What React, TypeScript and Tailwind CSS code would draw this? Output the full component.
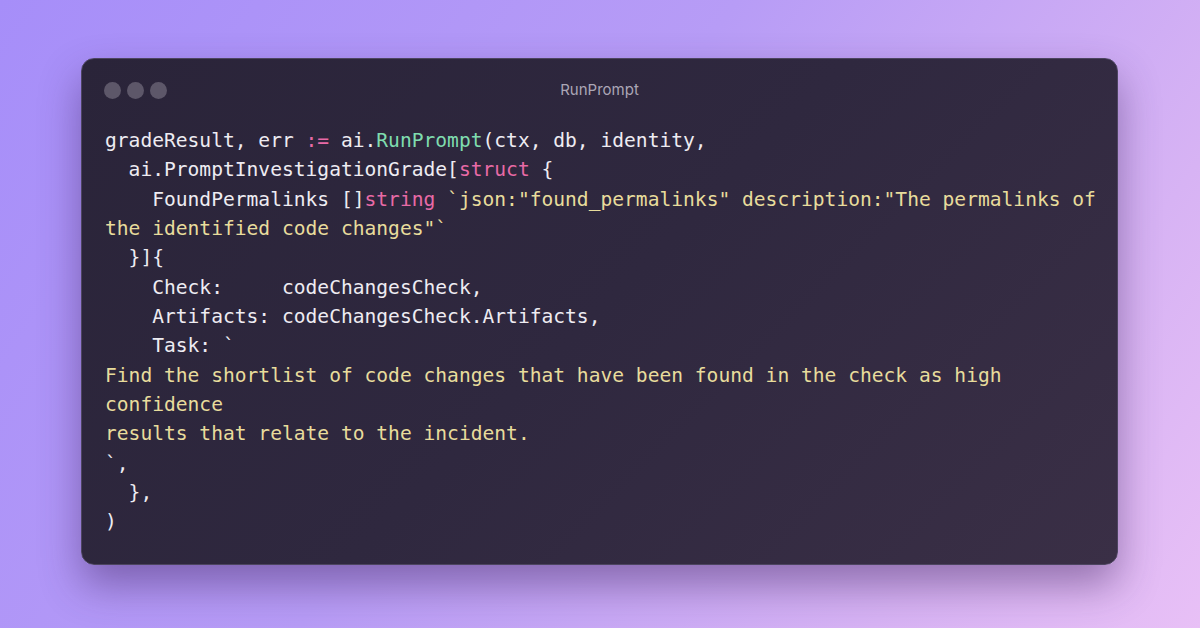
import React from "react";

const W = "text-[#eeecf2]";
const P = "text-[#e86aa6]";
const G = "text-[#7fdcaf]";
const Y = "text-[#e8dc9c]";

type Seg = [string, string];

const lines: Seg[][] = [
  [[W, "gradeResult, err "], [P, ":="], [W, " ai."], [G, "RunPrompt"], [W, "(ctx, db, identity,"]],
  [[W, "  ai.PromptInvestigationGrade["], [P, "struct"], [W, " {"]],
  [[W, "    FoundPermalinks []"], [P, "string"], [W, " "], [Y, '`json:"found_permalinks" description:"The permalinks of']],
  [[Y, 'the identified code changes"`']],
  [[W, "  }]{"]],
  [[W, "    Check:     codeChangesCheck,"]],
  [[W, "    Artifacts: codeChangesCheck.Artifacts,"]],
  [[W, "    Task: `"]],
  [[Y, "Find the shortlist of code changes that have been found in the check as high"]],
  [[Y, "confidence"]],
  [[Y, "results that relate to the incident."]],
  [[W, "`,"]],
  [[W, "  },"]],
  [[W, ")"]],
];

export default function App() {
  return (
    <div className="w-[1200px] h-[628px] overflow-hidden bg-[linear-gradient(125deg,#a68ef9_0%,#b79cf6_45%,#d7b3f4_80%,#e8c0f6_100%)] pt-[58px] px-[81px]">
      <div className="w-[1037px] h-[507px] rounded-[13px] border border-[#4d4560] bg-[linear-gradient(135deg,#2a2439_0%,#2f283f_50%,#3a2f46_100%)] shadow-[0_20px_40px_rgba(60,30,90,0.45)] relative">
        <div className="h-[63px] flex items-center px-[22px] relative">
          <div className="flex gap-[6px]">
            <div className="w-[17px] h-[17px] rounded-full bg-[#5d5769]" />
            <div className="w-[17px] h-[17px] rounded-full bg-[#5d5769]" />
            <div className="w-[17px] h-[17px] rounded-full bg-[#5d5769]" />
          </div>
          <div className="absolute inset-0 flex items-center justify-center text-[15px] text-[#aba6b6] font-['Inter','Noto_Sans',sans-serif]">
            RunPrompt
          </div>
        </div>
        <div className="pl-[23px] pt-[4px] font-['DejaVu_Sans_Mono','Liberation_Mono',monospace] text-[19.6px] leading-[29.35px] whitespace-pre">
          {lines.map((segs, i) => (
            <div key={i}>
              {segs.map(([c, t], j) => (
                <span key={j} className={c}>
                  {t}
                </span>
              ))}
            </div>
          ))}
        </div>
      </div>
    </div>
  );
}
